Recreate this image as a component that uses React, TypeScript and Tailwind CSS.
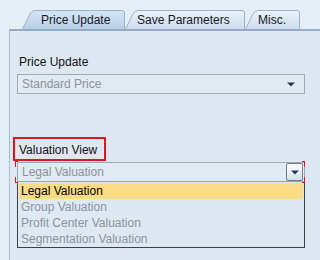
import React from "react";

function TabShape({ active, width }: { active: boolean; width: number }) {
  const h = 19;
  const id = active ? "gA" : "gI";
  return (
    <svg className="absolute inset-0" width={width} height={h} viewBox={`0 0 ${width} ${h}`}>
      <defs>
        <linearGradient id={id} x1="0" y1="0" x2="0" y2="1">
          {active ? (
            <>
              <stop offset="0" stopColor="#d6e5f4" />
              <stop offset="1" stopColor="#b8cfe8" />
            </>
          ) : (
            <>
              <stop offset="0" stopColor="#edf3fa" />
              <stop offset="1" stopColor="#cbdcee" />
            </>
          )}
        </linearGradient>
      </defs>
      <path
        d={`M0.5 ${h} L8 4 Q10 0.5 13 0.5 L${width - 3} 0.5 Q${width - 0.5} 0.5 ${width - 0.5} 3 L${width - 0.5} ${h}`}
        fill={`url(#${id})`}
        stroke="#9cb3ce"
        strokeWidth="1"
      />
    </svg>
  );
}

function Tab({ label, width, active, pl }: { label: string; width: number; active?: boolean; pl: number }) {
  return (
    <div className="relative h-[19px] shrink-0" style={{ width }}>
      <TabShape active={!!active} width={width} />
      <div
        className="relative h-[19px] pt-[1px] leading-[19px] text-[12px] text-[#15191f]"
        style={{ paddingLeft: pl }}
      >
        {label}
      </div>
    </div>
  );
}

function Caret() {
  return (
    <svg width="8" height="5" viewBox="0 0 8 5">
      <path d="M0 0.5 L8 0.5 L4 4.5 Z" fill="#23396a" />
    </svg>
  );
}

export default function App() {
  return (
    <div className="w-[320px] h-[260px] overflow-hidden bg-[#e5edf5] font-['Liberation_Sans',Arial,sans-serif] text-[12px] relative">
      <div className="flex h-[29px] pt-[10px] pl-[22px]">
        <div className="relative z-10 flex">
          <Tab label="Price Update" width={103} active pl={19} />
        </div>
        <div className="flex">
          <Tab label="Save Parameters" width={120} pl={12} />
        </div>
        <div className="flex">
          <Tab label="Misc." width={55} pl={13} />
        </div>
      </div>
      <div className="ml-[9px] h-[231px] border-l border-l-[#a7bbd1] border-t-2 border-t-[#93abc7] bg-[#dee8f3] pl-[7px] pt-[23px]">
        <div className="pl-[2px] h-[16px] leading-[16px] text-[#111]">Price Update</div>
        <div className="mt-[4px] w-[288px] h-[20px] border border-[#a2a9b1] bg-[#e2eaf3] flex items-center justify-between pl-[4px] pr-[9px]">
          <span className="text-[#8b939c]">Standard Price</span>
          <Caret />
        </div>
        <div className="mt-[48px] pl-[2px] h-[16px] leading-[16px] text-[#111]">Valuation View</div>
        <div className="mt-[4px] w-[288px] h-[20px] border border-[#a2a9b1] border-b-[#9aa3ad] bg-[#e2eaf3] flex items-center justify-between pl-[4px] pr-[1px]">
          <span className="text-[#8b939c]">Legal Valuation</span>
          <div className="w-[17px] h-[18px] rounded-[2px] border border-[#6f7c8c] bg-gradient-to-b from-[#ffffff] to-[#d3dfec] flex items-center justify-center">
            <Caret />
          </div>
        </div>
        <div className="w-[288px] h-[66px] border border-t-0 border-[#3d4045] bg-[#dee8f3] pt-[1px] px-[1px]">
          <div className="h-[16px] leading-[16px] bg-[#fcdc84] pl-[2px] text-[#000]">Legal Valuation</div>
          <div className="h-[16px] leading-[16px] pl-[2px] text-[#8b939c]">Group Valuation</div>
          <div className="h-[16px] leading-[16px] pl-[2px] text-[#8b939c]">Profit Center Valuation</div>
          <div className="h-[16px] leading-[16px] pl-[2px] text-[#8b939c]">Segmentation Valuation</div>
        </div>
      </div>
      <div className="absolute left-[13px] top-[137px] w-[93px] h-[24px] border-2 border-[#e3141b]" />
      <div className="absolute left-[15px] top-[161px] w-[3px] h-[6px] border-l border-t border-[#e3141b]" />
      <div className="absolute left-[15px] top-[177px] w-[3px] h-[6px] border-l border-b border-[#e3141b]" />
      <div className="absolute left-[302px] top-[161px] w-[3px] h-[6px] border-r border-t border-[#e3141b]" />
      <div className="absolute left-[302px] top-[177px] w-[3px] h-[6px] border-r border-b border-[#e3141b]" />
    </div>
  );
}
